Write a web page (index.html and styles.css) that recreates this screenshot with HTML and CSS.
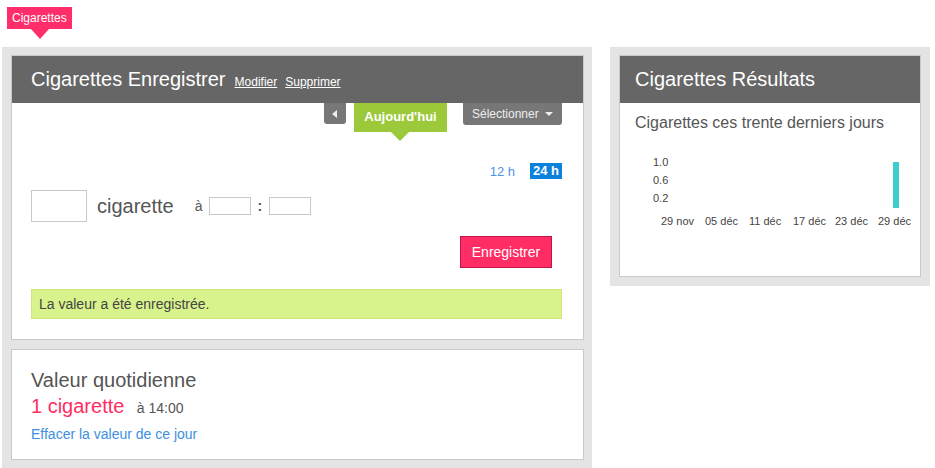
FILE: index.html
```html
<!DOCTYPE html>
<html lang="fr">
<head>
    <meta charset="UTF-8">
    <meta name="viewport" content="width=device-width, initial-scale=1.0">
    <title>Cigarettes</title>
    <link rel="stylesheet" href="styles.css">
</head>
<body>
    <div class="topbar">
        <span class="tag">Cigarettes</span>
    </div>

    <div class="columns">
        <div class="col col-main">
            <section class="card">
                <div class="card-head">
                    <h2>Cigarettes Enregistrer</h2>
                    <a href="#" class="head-link">Modifier</a>
                    <a href="#" class="head-link">Supprimer</a>
                </div>
                <div class="card-body">
                    <div class="day-nav">
                        <button class="nav-prev" type="button" aria-label="Jour précédent">
                            <svg width="6" height="8" viewBox="0 0 6 8"><path d="M5 0 L0 4 L5 8 Z" fill="#eee"/></svg>
                        </button>
                        <span class="today">Aujourd'hui</span>
                        <button class="select-btn" type="button">Sélectionner <span class="caret"></span></button>
                    </div>

                    <div class="clock-toggle">
                        <a href="#" class="clock-opt">12 h</a>
                        <span class="clock-opt active">24 h</span>
                    </div>

                    <form class="entry-row">
                        <input type="text" class="amount-input">
                        <span class="unit">cigarette</span>
                        <span class="at">à</span>
                        <input type="text" class="time-input">
                        <span class="colon">:</span>
                        <input type="text" class="time-input">
                    </form>

                    <div class="save-row">
                        <button type="button" class="btn-save">Enregistrer</button>
                    </div>

                    <div class="notice">La valeur a été enregistrée.</div>
                </div>
            </section>

            <section class="card daily">
                <h3>Valeur quotidienne</h3>
                <p class="daily-value"><span class="count">1 cigarette</span> <span class="time">à 14:00</span></p>
                <a href="#" class="clear-link">Effacer la valeur de ce jour</a>
            </section>
        </div>

        <div class="col col-side">
            <section class="card">
                <div class="card-head side-head">
                    <h2>Cigarettes Résultats</h2>
                </div>
                <div class="card-body results">
                    <h4>Cigarettes ces trente derniers jours</h4>
                    <svg class="chart" width="300" height="100" viewBox="0 0 300 100">
                        <g class="y-labels">
                            <text x="33" y="21">1.0</text>
                            <text x="33" y="39">0.6</text>
                            <text x="33" y="57">0.2</text>
                        </g>
                        <rect x="273" y="17" width="6" height="46" fill="#3ccfcd"/>
                        <g class="x-labels">
                            <text x="41" y="80">29 nov</text>
                            <text x="85" y="80">05 déc</text>
                            <text x="129" y="80">11 déc</text>
                            <text x="173" y="80">17 déc</text>
                            <text x="215" y="80">23 déc</text>
                            <text x="258" y="80">29 déc</text>
                        </g>
                    </svg>
                </div>
            </section>
        </div>
    </div>
</body>
</html>
```

FILE: styles.css
```css
body {
    margin: 0;
    font-family: 'Liberation Sans', Arial, sans-serif;
    color: #555;
    background: #fff;
}

.topbar {
    height: 47px;
    padding: 7px 0 0 7px;
    box-sizing: border-box;
}

.tag {
    position: relative;
    display: inline-block;
    height: 22px;
    line-height: 22px;
    padding: 0 5px;
    background: #ff2d6a;
    color: #fff;
    font-size: 12px;
}

.tag::after {
    content: '';
    position: absolute;
    left: 24px;
    top: 22px;
    border-left: 9px solid transparent;
    border-right: 9px solid transparent;
    border-top: 10px solid #ff2d6a;
}

.columns {
    display: flex;
    align-items: flex-start;
    gap: 18px;
    padding-left: 2px;
}

.col {
    background: #e3e4e3;
    box-sizing: border-box;
}

.col-main {
    width: 590px;
    padding: 8px 8px 9px 9px;
    display: flex;
    flex-direction: column;
    gap: 9px;
}

.col-side {
    width: 320px;
    padding: 8px 9px 9px 9px;
}

.card {
    background: #fff;
    border: 1px solid #c9c9c9;
}

.card-head {
    height: 47px;
    background: #666;
    display: flex;
    align-items: baseline;
    padding-left: 19px;
}

.side-head {
    padding-left: 15px;
}

.card-head h2 {
    margin: 0;
    font-size: 20px;
    font-weight: normal;
    line-height: 47px;
    color: #fff;
}

.head-link {
    margin-left: 9px;
    font-size: 12px;
    color: #fff;
}

.head-link + .head-link {
    margin-left: 8px;
}

.card-body {
    padding: 0 21px 20px 19px;
}

/* day navigation */
.day-nav {
    display: flex;
    justify-content: flex-end;
    align-items: flex-start;
    height: 29px;
}

.nav-prev {
    width: 22px;
    height: 21px;
    margin-right: 8px;
    padding: 0;
    border: none;
    background: #777;
    border-radius: 0 0 3px 3px;
    display: flex;
    align-items: center;
    justify-content: center;
}

.today {
    position: relative;
    width: 93px;
    height: 29px;
    line-height: 28px;
    text-align: center;
    background: #9bc93a;
    color: #fff;
    font-size: 13px;
    font-weight: bold;
    margin-right: 16px;
}

.today::after {
    content: '';
    position: absolute;
    left: 37px;
    top: 29px;
    border-left: 9px solid transparent;
    border-right: 9px solid transparent;
    border-top: 9px solid #9bc93a;
}

.select-btn {
    width: 99px;
    height: 22px;
    padding: 0 0 0 9px;
    border: none;
    border-radius: 0 0 3px 3px;
    background: #777;
    color: #eee;
    font-family: inherit;
    font-size: 12px;
    text-align: left;
    display: flex;
    align-items: center;
}

.caret {
    margin-left: 6px;
    border-left: 4px solid transparent;
    border-right: 4px solid transparent;
    border-top: 4px solid #eee;
}

.clock-toggle {
    display: flex;
    justify-content: flex-end;
    align-items: center;
    gap: 15px;
    margin-top: 31px;
    height: 16px;
    font-size: 13px;
}

.clock-opt {
    color: #4a93e6;
    text-decoration: none;
}

.clock-opt.active {
    background: #0b82dc;
    color: #fff;
    font-weight: bold;
    line-height: 16px;
    padding: 0 3px;
}

.entry-row {
    display: flex;
    align-items: center;
    height: 32px;
    margin: 11px 0 0;
}

.entry-row input {
    border: 1px solid #c8c8c8;
    box-sizing: border-box;
    padding: 0;
    margin: 0;
}

.amount-input {
    width: 56px;
    height: 32px;
}

.unit {
    margin-left: 10px;
    font-size: 20px;
}

.at {
    margin-left: 21px;
    margin-right: 6px;
    font-size: 14px;
}

.time-input {
    width: 42px;
    height: 18px;
}

.colon {
    margin: 0 7px;
    font-size: 14px;
    font-weight: bold;
}

.save-row {
    display: flex;
    justify-content: flex-end;
    margin-top: 14px;
    padding-right: 10px;
}

.btn-save {
    width: 92px;
    height: 32px;
    background: #ff2d64;
    border: 1px solid #b9164a;
    color: #fff;
    font-family: inherit;
    font-size: 14px;
}

.notice {
    margin-top: 21px;
    height: 30px;
    line-height: 28px;
    box-sizing: border-box;
    padding-left: 7px;
    background: #d8f38b;
    border: 1px solid #cfe67f;
    font-size: 14px;
    color: #444;
}

/* daily value */
.daily {
    padding: 18px 19px 16px;
}

.daily h3 {
    margin: 0;
    font-size: 20px;
    font-weight: normal;
    line-height: 24px;
}

.daily-value {
    margin: 2px 0 0;
    line-height: 24px;
}

.count {
    color: #ff2d64;
    font-size: 20px;
}

.time {
    margin-left: 8px;
    font-size: 14px;
}

.clear-link {
    display: block;
    margin-top: 5px;
    line-height: 18px;
    font-size: 14px;
    color: #3d8fe3;
    text-decoration: none;
}

/* results */
.results {
    padding: 10px 0 31px;
}

.results h4 {
    margin: 0;
    padding-left: 15px;
    font-size: 16px;
    font-weight: normal;
    line-height: 20px;
}

.chart {
    display: block;
    margin-top: 12px;
}

.chart text {
    font-family: 'Liberation Sans', Arial, sans-serif;
    font-size: 11px;
    fill: #444;
}
```
